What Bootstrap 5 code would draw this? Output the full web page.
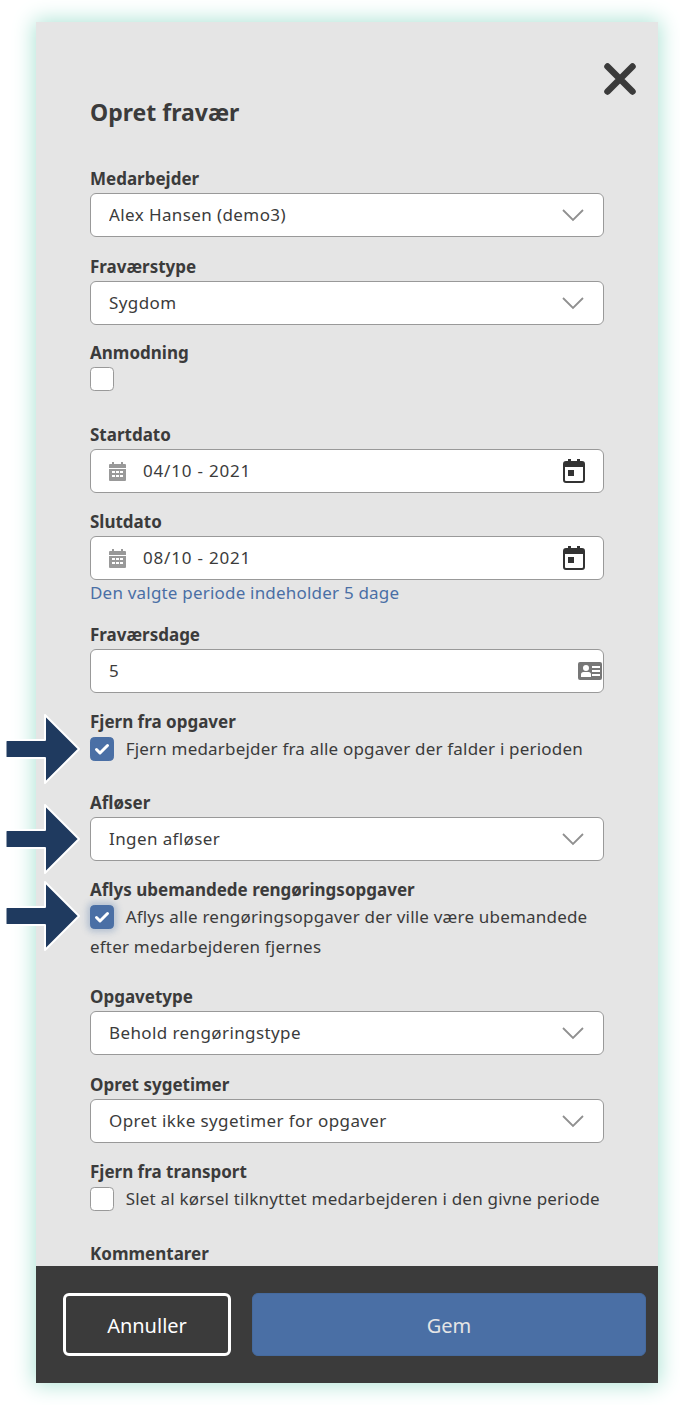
<!DOCTYPE html>
<html lang="da">
<head>
  <meta charset="UTF-8"/>
  <meta name="viewport" content="width=device-width, initial-scale=1.0"/>
  <title>Opret fravær</title>
  <link href="https://cdn.jsdelivr.net/npm/bootstrap@5.3.0/dist/css/bootstrap.min.css" rel="stylesheet"/>
  <style>
    html, body { height: 1405px; overflow: hidden; background: #fff; }
    body { font-family: "Noto Sans", "Liberation Sans", sans-serif; color: #3b3b3b; font-size: 17px; letter-spacing: .2px; padding: 22px 22px 0 36px; }

    .sheet { position: relative; width: 622px; height: 1361px; background: #e5e5e5; box-shadow: 0 0 20px 2px #aee4d6; }
    .sheet-scroll { height: 1244px; overflow: hidden; }
    .close-row { padding: 41px 22px 0 0; height: 73px; }
    .abs-form { padding: 0 54px; }
    .abs-title { font-size: 23px; line-height: 30px; font-weight: 700; letter-spacing: 0; margin: 2px 0 40px; color: #3b3b3b; }

    .fld-label { display: block; font-weight: 700; letter-spacing: 0; line-height: 22px; padding-top: 1px; margin-bottom: 3px; }
    .fld { margin-bottom: 18px; }
    .fld-17 { margin-bottom: 17px; }
    .fld-16 { margin-bottom: 16px; }
    .fld-23 { margin-bottom: 23px; }
    .fld-27 { margin-bottom: 27px; }
    .fld-28 { margin-bottom: 28px; }

    .form-select, .form-control, .field-box {
      height: 44px; border: 1px solid #999; border-radius: 6px; background-color: #fff;
      font-size: 17px; letter-spacing: .4px; color: #3b3b3b; box-shadow: none;
    }
    .form-select {
      padding: 0 44px 0 18px;
      background-image: url("data:image/svg+xml,%3csvg xmlns='http://www.w3.org/2000/svg' viewBox='0 0 22 13'%3e%3cpath fill='none' stroke='%23909090' stroke-width='1.8' d='M1 1l10 10L21 1'/%3e%3c/svg%3e");
      background-position: right 19px center; background-size: 22px 13px;
    }
    .field-box { padding: 0 18px; }
    .field-box.num-box { padding-right: 1px; }
    .bare-input { border: 0; outline: 0; background: transparent; padding: 0; color: #3b3b3b; letter-spacing: .4px; min-width: 0; }
    .date-text { margin-left: 17px; letter-spacing: .8px; }

    .form-check-input { width: 24px; height: 24px; margin: 0; border: 1px solid #999; border-radius: 5px; background-color: #fff; float: none; }
    .form-check-input:checked {
      background-color: #4a6fa5; border-color: #4a6fa5; background-size: 24px;
      background-image: url("data:image/svg+xml,%3csvg xmlns='http://www.w3.org/2000/svg' viewBox='0 0 24 24'%3e%3cpath fill='none' stroke='%23fff' stroke-width='3' stroke-linecap='round' stroke-linejoin='round' d='M6.500 12.500l3.500 3.500 7.500-7.500'/%3e%3c/svg%3e");
    }
    .check-glow { box-shadow: 0 0 6px 3px rgba(74, 111, 165, .3); }
    .check-line { display: block; line-height: 30px; margin: -2px 0 0; }
    .check-line .form-check-input { vertical-align: -6px; margin-right: 7px; }
    .hint-blue { color: #4a6fa5; line-height: 24px; margin: 1px 0 18px; }

    .sheet-foot { height: 117px; background: #3b3b3b; padding: 27px 12px 27px 27px; gap: 21px; }
    .btn-cancel, .btn-save { height: 63px; font-size: 20px; border-radius: 6px; padding-top: 8px; }
    .btn-cancel { width: 168px; border: 3px solid #fff; color: #fff; background: transparent; }
    .btn-save { flex: 1; background: #4a6fa5; border: 1px solid #456a9e; color: #e5e5e5; }

    .call-arrow { position: absolute; left: -32px; width: 78px; height: 72px; }
  </style>
</head>
<body>
  <div class="sheet d-flex flex-column">
    <div class="sheet-scroll">
      <div class="close-row d-flex justify-content-end">
        <svg width="32" height="32" viewBox="0 0 32 32"><path d="M3.500 3.500l25 25M28.500 3.500l-25 25" fill="none" stroke="#3b3b3b" stroke-width="6.500" stroke-linecap="round"/></svg>
      </div>

      <form class="abs-form">
        <h1 class="abs-title">Opret fravær</h1>

        <div class="fld">
          <label class="fld-label">Medarbejder</label>
          <select class="form-select"><option>Alex Hansen (demo3)</option></select>
        </div>
        <div class="fld-16">
          <label class="fld-label">Fraværstype</label>
          <select class="form-select"><option>Sygdom</option></select>
        </div>
        <div class="mb-4 pb-2">
          <label class="fld-label">Anmodning</label>
          <input class="form-check-input d-block" type="checkbox"/>
        </div>
        <div class="fld-17">
          <label class="fld-label">Startdato</label>
          <div class="field-box d-flex align-items-center">
            <svg width="17" height="19" viewBox="0 0 17 19" fill="#999"><path d="M3 0h2v3H3zM12 0h2v3h-2z"/><path d="M1 2h15a1 1 0 0 1 1 1v3H0V3a1 1 0 0 1 1-1z"/><path fill-rule="evenodd" d="M0 7h17v11a1 1 0 0 1-1 1H1a1 1 0 0 1-1-1zM3 9v2h3V9zm4 0v2h3V9zm4 0v2h3V9zM3 13v2h3v-2zm4 0v2h3v-2zm4 0v2h3v-2z"/></svg>
            <input class="bare-input date-text flex-grow-1" value="04/10 - 2021"/>
            <svg width="22" height="24" viewBox="0 0 22 24"><path d="M5 0h3v4H5zM14 0h3v4h-3z" fill="#333"/><rect x="1" y="3" width="20" height="20" rx="2" fill="none" stroke="#333" stroke-width="2"/><path d="M1 3h20v5H1z" fill="#333"/><path d="M5 11h6v6H5z" fill="#333"/></svg>
          </div>
        </div>
        <div>
          <label class="fld-label">Slutdato</label>
          <div class="field-box d-flex align-items-center">
            <svg width="17" height="19" viewBox="0 0 17 19" fill="#999"><path d="M3 0h2v3H3zM12 0h2v3h-2z"/><path d="M1 2h15a1 1 0 0 1 1 1v3H0V3a1 1 0 0 1 1-1z"/><path fill-rule="evenodd" d="M0 7h17v11a1 1 0 0 1-1 1H1a1 1 0 0 1-1-1zM3 9v2h3V9zm4 0v2h3V9zm4 0v2h3V9zM3 13v2h3v-2zm4 0v2h3v-2zm4 0v2h3v-2z"/></svg>
            <input class="bare-input date-text flex-grow-1" value="08/10 - 2021"/>
            <svg width="22" height="24" viewBox="0 0 22 24"><path d="M5 0h3v4H5zM14 0h3v4h-3z" fill="#333"/><rect x="1" y="3" width="20" height="20" rx="2" fill="none" stroke="#333" stroke-width="2"/><path d="M1 3h20v5H1z" fill="#333"/><path d="M5 11h6v6H5z" fill="#333"/></svg>
          </div>
          <p class="hint-blue">Den valgte periode indeholder 5 dage</p>
        </div>
        <div class="fld-17">
          <label class="fld-label">Fraværsdage</label>
          <div class="field-box num-box d-flex align-items-center">
            <input class="bare-input flex-grow-1" value="5"/>
            <svg width="24" height="18" viewBox="0 0 24 18"><path fill="#777" fill-rule="evenodd" d="M2 0h20a2 2 0 0 1 2 2v14a2 2 0 0 1-2 2H2a2 2 0 0 1-2-2V2a2 2 0 0 1 2-2zm6 3a3 3 0 1 0 0 6 3 3 0 0 0 0-6zM3 15h10v-2.500a2.500 2.500 0 0 0-2.500-2.500h-5A2.500 2.500 0 0 0 3 12.500zM14 4v2h8V4zm0 4v2h8V8zm0 4v2h8v-2z"/></svg>
          </div>
        </div>
        <div class="fld-27">
          <label class="fld-label">Fjern fra opgaver</label>
          <label class="check-line"><input class="form-check-input" type="checkbox" checked/> <span>Fjern medarbejder fra alle opgaver der falder i perioden</span></label>
        </div>
        <div class="fld-17">
          <label class="fld-label">Afløser</label>
          <select class="form-select"><option>Ingen afløser</option></select>
        </div>
        <div class="fld-23">
          <label class="fld-label">Aflys ubemandede rengøringsopgaver</label>
          <label class="check-line"><input class="form-check-input check-glow" type="checkbox" checked/> <span>Aflys alle rengøringsopgaver der ville være ubemandede efter medarbejderen fjernes</span></label>
        </div>
        <div class="fld">
          <label class="fld-label">Opgavetype</label>
          <select class="form-select"><option>Behold rengøringstype</option></select>
        </div>
        <div class="fld-17">
          <label class="fld-label">Opret sygetimer</label>
          <select class="form-select"><option>Opret ikke sygetimer for opgaver</option></select>
        </div>
        <div class="fld-28">
          <label class="fld-label">Fjern fra transport</label>
          <label class="check-line"><input class="form-check-input" type="checkbox"/> <span>Slet al kørsel tilknyttet medarbejderen i den givne periode</span></label>
        </div>
        <div>
          <label class="fld-label">Kommentarer</label>
          <textarea class="form-control" rows="3"></textarea>
        </div>
      </form>
    </div>

    <div class="sheet-foot d-flex">
      <button type="button" class="btn btn-cancel">Annuller</button>
      <button type="button" class="btn btn-save">Gem</button>
    </div>

    <!-- annotation arrows on top of the form -->
    <svg class="call-arrow" style="top:691px" viewBox="0 0 78 72"><path d="M3 27h38V2l34 34-34 34V45H3a1.500 1.500 0 0 1-1.500-1.500v-15A1.500 1.500 0 0 1 3 27z" fill="#1f3a5f" stroke="#fff" stroke-width="2" stroke-linejoin="round"/></svg>
    <svg class="call-arrow" style="top:781px" viewBox="0 0 78 72"><path d="M3 27h38V2l34 34-34 34V45H3a1.500 1.500 0 0 1-1.500-1.500v-15A1.500 1.500 0 0 1 3 27z" fill="#1f3a5f" stroke="#fff" stroke-width="2" stroke-linejoin="round"/></svg>
    <svg class="call-arrow" style="top:858px" viewBox="0 0 78 72"><path d="M3 27h38V2l34 34-34 34V45H3a1.500 1.500 0 0 1-1.500-1.500v-15A1.500 1.500 0 0 1 3 27z" fill="#1f3a5f" stroke="#fff" stroke-width="2" stroke-linejoin="round"/></svg>
  </div>

  <script src="https://cdn.jsdelivr.net/npm/bootstrap@5.3.0/dist/js/bootstrap.bundle.min.js"></script>
</body>
</html>
